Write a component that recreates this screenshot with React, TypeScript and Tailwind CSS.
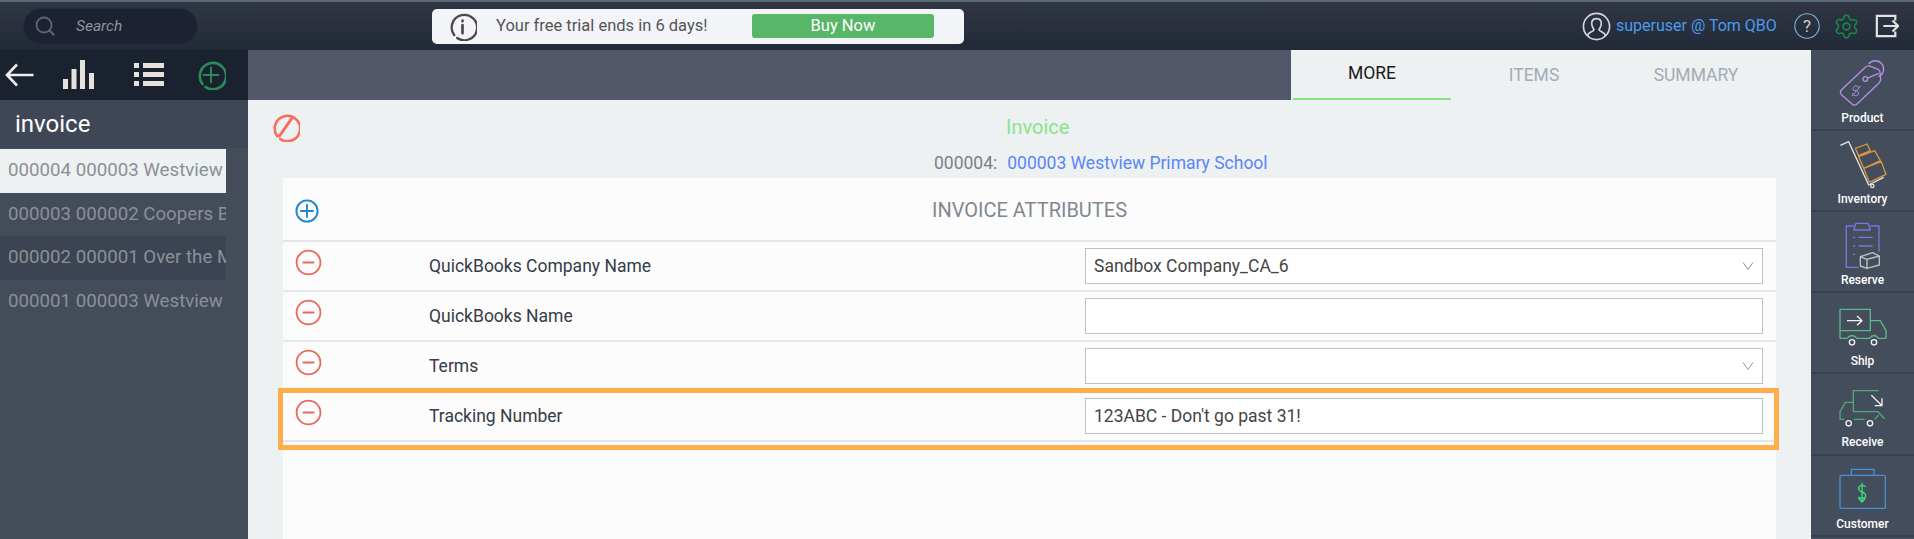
import React from "react";
import { Settings } from "lucide-react";

const Ring = ({ size, color, sw, cls, children }: { size: number; color: string; sw: number; cls?: string; children?: React.ReactNode }) => (
  <svg width={size} height={size} viewBox="0 0 24 24" fill="none" stroke={color} strokeWidth={sw} strokeLinecap="round" className={cls}>
    <path d="M5.2 19.2A10.5 10.5 0 1 1 7.6 21.5" />
    {children}
  </svg>
);
const FullRing = ({ size, color, sw, cls, children }: { size: number; color: string; sw: number; cls?: string; children?: React.ReactNode }) => (
  <svg width={size} height={size} viewBox="0 0 24 24" fill="none" stroke={color} strokeWidth={sw} strokeLinecap="round" className={cls}>
    <circle cx="12" cy="12" r="10.6" />
    {children}
  </svg>
);

const Chevron = () => (
  <svg width="12" height="10" viewBox="0 0 12 10" fill="none" stroke="#8d979f" strokeWidth="1" className="absolute right-[9px] top-[13px]">
    <path d="M1 1.5 L6 8.5 L11 1.5" />
  </svg>
);

const rows = [
  { label: "QuickBooks Company Name", value: "Sandbox Company_CA_6", select: true },
  { label: "QuickBooks Name", value: "", select: false },
  { label: "Terms", value: "", select: true },
  { label: "Tracking Number", value: "123ABC - Don't go past 31!", select: false, mark: true },
];

const list = [
  { t: "000004 000003 Westview Primary School", c: "bg-[#edf1f2] text-[#8b9097]" },
  { t: "000003 000002 Coopers Bakery Supply", c: "text-[#8b9097]" },
  { t: "000002 000001 Over the Moon Dairy", c: "bg-[#3c4453] text-[#8b9097]" },
  { t: "000001 000003 Westview Primary School", c: "text-[#8b9097]" },
];

const side = [
  {
    label: "Product",
    vb: "112 42 162 168",
    h: "h-[81px]",
    art: (
      <g fill="none" stroke="#b48fe4" strokeWidth="4">
        <path d="M128 150 L200 82 Q205 77 212 78 L238 88 Q243 90 244 96 L246 118 Q246 124 242 128 L175 192 Q168 198 161 193 L129 165 Q122 158 128 150 Z" />
        <circle cx="200" cy="117" r="7" />
        <path d="M210 72 A25 25 0 1 1 240 110 M205 115 L240 100" />
        <path d="M182 143 Q170 132 164 143 Q160 152 172 152 Q184 154 178 164 Q170 172 160 160 M160 168 L186 138" strokeWidth="3" />
      </g>
    ),
  },
  {
    label: "Inventory",
    vb: "112 285 162 168",
    h: "h-[81px]",
    art: (
      <g fill="none" strokeWidth="4" strokeLinejoin="round">
        <path d="M125 316 L150 305 L210 435 L255 412" stroke="#e4e6ea" />
        <circle cx="221" cy="438" r="5" stroke="#e4e6ea" />
        <path d="M170 325 L205 312 L215 332 L180 347 Z M180 350 L228 332 L245 362 L195 385 Z M195 385 L248 365 L262 403 L212 427 Z" stroke="#d9963f" />
      </g>
    ),
  },
  {
    label: "Reserve",
    vb: "112 18 162 168",
    h: "h-[81px]",
    art: (
      <g fill="none" strokeWidth="4" strokeLinejoin="round">
        <path d="M165 48 L143 48 L143 172 L180 172 M215 48 L241 48 L241 125 M165 60 L172 40 L208 40 L215 60 Z M180 82 L222 82 M180 108 L222 108 M163 82 L170 82 M163 108 L170 108 M163 133 L170 133" stroke="#7f74e0" />
        <path d="M185 140 L222 128 L242 138 L242 165 L205 175 L185 168 Z M185 140 L205 148 L242 138 M205 148 L205 175" stroke="#bfc2c6" />
      </g>
    ),
  },
  {
    label: "Ship",
    vb: "112 261 162 168",
    h: "h-[81px]",
    art: (
      <g fill="none" strokeWidth="4" strokeLinejoin="round">
        <path d="M124 298 L215 298 L215 362 L124 362 Z M215 332 L245 332 L262 362 L262 385 L240 385 Q226 368 212 385 L175 385 Q160 368 145 385 L124 385 L124 362" stroke="#5cb887" />
        <path d="M145 332 L188 332 M175 318 L190 332 L175 346" stroke="#f2f2f2" />
        <circle cx="160" cy="397" r="8" stroke="#f2f2f2" />
        <circle cx="226" cy="397" r="8" stroke="#f2f2f2" />
      </g>
    ),
  },
  {
    label: "Receive",
    vb: "112 24 162 168",
    h: "h-[82px]",
    art: (
      <g fill="none" strokeWidth="4" strokeLinejoin="round">
        <path d="M240 62 L164 62 L164 125 L238 125 L258 146 M164 97 L140 97 L124 125 L124 148 L136 148 M165 148 L198 148 M228 148 L240 135" stroke="#52a878" />
        <path d="M218 76 L250 107 M250 85 L250 107 L228 107" stroke="#f2f2f2" />
        <circle cx="150" cy="160" r="8" stroke="#f2f2f2" />
        <circle cx="214" cy="160" r="8" stroke="#f2f2f2" />
      </g>
    ),
  },
  {
    label: "Customer",
    vb: "112 270 162 168",
    h: "h-[81px]",
    art: (
      <g fill="none" strokeWidth="4" strokeLinejoin="round">
        <path d="M128 316 L256 316 Q260 316 260 320 L260 411 Q260 415 256 415 L128 415 Q124 415 124 411 L124 320 Q124 316 128 316 Z M158 316 L158 298 L226 298 L226 316" stroke="#4a90d9" />
        <path d="M201 350 Q190 342 181 350 Q177 362 190 366 Q204 370 200 382 Q190 390 179 381 M190 338 L190 395 M180 385 L190 396 L200 385" stroke="#3fe07d" />
      </g>
    ),
  },
];

export default function App() {
  return (
    <div className="flex h-[539px] w-[1914px] flex-col overflow-hidden bg-[#444c5a] font-['Roboto',sans-serif]">
      {/* top bar */}
      <header className="flex h-[50px] shrink-0 items-center border-t-2 border-[#5a6a76] bg-gradient-to-b from-[#303644] to-[#222937] pl-[23px]">
        <div className="flex h-[37px] w-[175px] items-center rounded-full border border-[#252d3d] bg-[#1c2232] pl-[10px]">
          <svg width="22" height="22" viewBox="0 0 22 22" fill="none" stroke="#5d6673" strokeWidth="1.8">
            <circle cx="10" cy="10" r="7.5" />
            <path d="M15.5 15.5 L20 20" strokeWidth="2.2" />
          </svg>
          <span className="ml-[20px] pt-[1px] text-[15.5px] italic text-[#8d929a]">Search</span>
        </div>
        <div className="ml-[234px] flex h-[35px] w-[532px] items-center rounded-[5px] bg-[#f3f4f8] pl-[16px]">
          <Ring size={29} color="#4a4a4a" sw={1.9}>
            <path d="M12 7.2 L12 7.6 M12 10.8 L12 17.5" strokeWidth="2.2" />
          </Ring>
          <span className="ml-[19px] w-[256px] pt-[1px] text-[16.5px] leading-none text-[#555]">Your free trial ends in 6 days!</span>
          <div className="flex h-[24px] w-[182px] items-center justify-center rounded-[3px] bg-[#58b668] text-[16.5px] text-white">Buy Now</div>
        </div>
        <div className="ml-auto flex items-center pr-[15px]">
          <svg width="29" height="29" viewBox="0 0 28 28" fill="none" stroke="#d5d7da" strokeWidth="1.6">
            <circle cx="14" cy="14" r="12.6" />
            <path d="M5.5 23 C6 19 11 19.5 11.6 17 C9.5 14 9 11 9.7 9 C11 5.5 17 5.5 18.3 9 C19 11 18.5 14 16.4 17 C17 19.5 22 19 22.5 23" />
          </svg>
          <span className="ml-[5px] w-[162px] whitespace-nowrap text-[16px] text-[#4a9bf0]">superuser @ Tom QBO</span>
          <svg width="26" height="26" viewBox="0 0 26 26" fill="none" stroke="#7fb3d9" strokeWidth="1.1" className="ml-[16px]">
            <circle cx="13" cy="13" r="12.2" />
            <text x="13" y="19" textAnchor="middle" fontSize="17" stroke="none" fill="#c8d2da" fontFamily="Roboto">?</text>
          </svg>
          <Settings size={27} color="#158a45" strokeWidth={1.4} className="ml-[13px]" />
          <svg width="24" height="24" viewBox="0 0 26 26" fill="none" stroke="#e2e2e2" strokeWidth="2.4" className="ml-[15px]">
            <path d="M22 7 L22 2 L2 2 L2 24 L22 24 L22 19 M9 13 L25 13 M19 7 L25 13 L19 19" />
          </svg>
        </div>
      </header>

      <div className="flex min-h-0 flex-1">
        {/* left sidebar */}
        <aside className="w-[248px] shrink-0 bg-[#444c5a]">
          <nav className="flex h-[50px] items-center bg-[#1a2230]">
            <svg width="29" height="24" viewBox="0 0 29 24" fill="none" stroke="#f0eeec" strokeWidth="2.6" className="ml-[5px]">
              <path d="M28.5 12 L2 12 M12 1.5 L2 12 L12 22.5" />
            </svg>
            <svg width="31" height="30" viewBox="0 0 31 30" fill="#e8e2de" className="ml-[29px]">
              <rect x="0" y="19" width="5" height="10" />
              <rect x="8.5" y="9" width="5" height="20" />
              <rect x="17" y="0" width="5" height="29" />
              <rect x="26" y="13" width="5" height="16" />
            </svg>
            <svg width="30" height="25" viewBox="0 0 30 25" fill="#e8e2de" className="ml-[40px]">
              <rect x="0" y="0" width="5" height="5" />
              <rect x="9" y="0" width="21" height="5" />
              <rect x="0" y="9" width="5" height="5" />
              <rect x="9" y="9" width="21" height="5" />
              <rect x="0" y="18" width="5" height="5" />
              <rect x="9" y="18" width="21" height="5" />
            </svg>
            <Ring size={30} color="#2a8a55" sw={2.1} cls="ml-[32px]">
              <path d="M12 6 L12 18 M6 12 L18 12" strokeWidth="1.6" />
            </Ring>
          </nav>
          <div className="flex h-[48px] items-center bg-[#3f4757] pl-[15px] text-[24px] text-white">invoice</div>
          <ul className="mt-px w-[226px]">
            {list.map((r) => (
              <li key={r.t} className={`h-[43.7px] overflow-hidden whitespace-nowrap pl-[8px] text-[18.7px] leading-[43px] ${r.c}`}>
                {r.t}
              </li>
            ))}
          </ul>
        </aside>

        {/* main */}
        <main className="flex min-w-0 flex-1 flex-col bg-[#edf1f2]">
          <div className="flex h-[50px] shrink-0 justify-end bg-[#525869]">
            <div className="flex w-[520px] bg-[#edf1f2] pr-[34px] text-[17.5px]">
              <div className="mx-[2px] flex w-[158px] items-center justify-center border-b-2 border-[#86e582] pb-[2px] text-[#1a1a1a]">MORE</div>
              <div className="flex w-[162px] items-center justify-center pt-[1px] text-[#a5abb5]">ITEMS</div>
              <div className="flex w-[162px] items-center justify-center pt-[1px] text-[#a5abb5]">SUMMARY</div>
            </div>
          </div>
          <div className="flex h-[78px] shrink-0">
            <Ring size={29} color="#fb6a5a" sw={2.1} cls="ml-[23px] mt-[13px]">
              <path d="M7 19 L17.5 4" strokeWidth="2.4" />
            </Ring>
            <div className="ml-[634px] flex flex-col">
              <div className="ml-[72px] mt-[12px] text-[20px] leading-[30px] text-[#8de28a]">Invoice</div>
              <div className="mt-[11px] flex text-[17.5px] leading-[20px]">
                <span className="text-[#7b8089]">000004:</span>
                <span className="ml-[10px] text-[#5b86f5]">000003 Westview Primary School</span>
              </div>
            </div>
          </div>
          <section className="mx-[35px] flex-1 bg-[#fcfcfc]">
            <div className="relative flex h-[64px] items-center justify-center border-b-2 border-[#e4e7ea] pt-[1px] text-[20px] text-[#7f8890]">
              <FullRing size={24} color="#1a86d0" sw={1.9} cls="absolute left-[12px] top-[21px]">
                <path d="M12 6 L12 18 M6 12 L18 12" strokeWidth="1.9" />
              </FullRing>
              INVOICE ATTRIBUTES
            </div>
            {rows.map((r) => (
              <div key={r.label} className="relative flex h-[50px] border-b-2 border-[#e4e7ea]">
                <FullRing size={27} color="#e8685c" sw={1.6} cls="ml-[12px] mt-[7px] shrink-0">
                  <path d="M7.5 12 L16.5 12" strokeWidth="1.8" />
                </FullRing>
                <div className="ml-[107px] w-[656px] pt-[14px] text-[17.5px] leading-[20px] text-[#353c48]">{r.label}</div>
                <div className="relative mt-[6px] h-[36px] w-[678px]">
                  <input
                    readOnly
                    value={r.value}
                    className="h-full w-full border border-[#b8c4cc] bg-white pl-[8px] text-[17.5px] text-[#454545] outline-none"
                  />
                  {r.select && <Chevron />}
                </div>
                {r.mark && <div className="pointer-events-none absolute -left-[5px] -right-[3px] -top-[4px] -bottom-[10px] border-[5px] border-[#ffad4a]" />}
              </div>
            ))}
          </section>
        </main>

        {/* right sidebar */}
        <aside className="w-[103px] shrink-0 bg-[#444d5b]">
          {side.map((s) => (
            <div key={s.label} className={`flex ${s.h} flex-col items-center border-b-2 border-[#3a414e] pt-[4px]`}>
              <svg width="54" height="56" viewBox={s.vb}>{s.art}</svg>
              <span className="mt-[1px] text-[12px] font-medium leading-[14px] text-white">{s.label}</span>
            </div>
          ))}
        </aside>
      </div>
    </div>
  );
}
